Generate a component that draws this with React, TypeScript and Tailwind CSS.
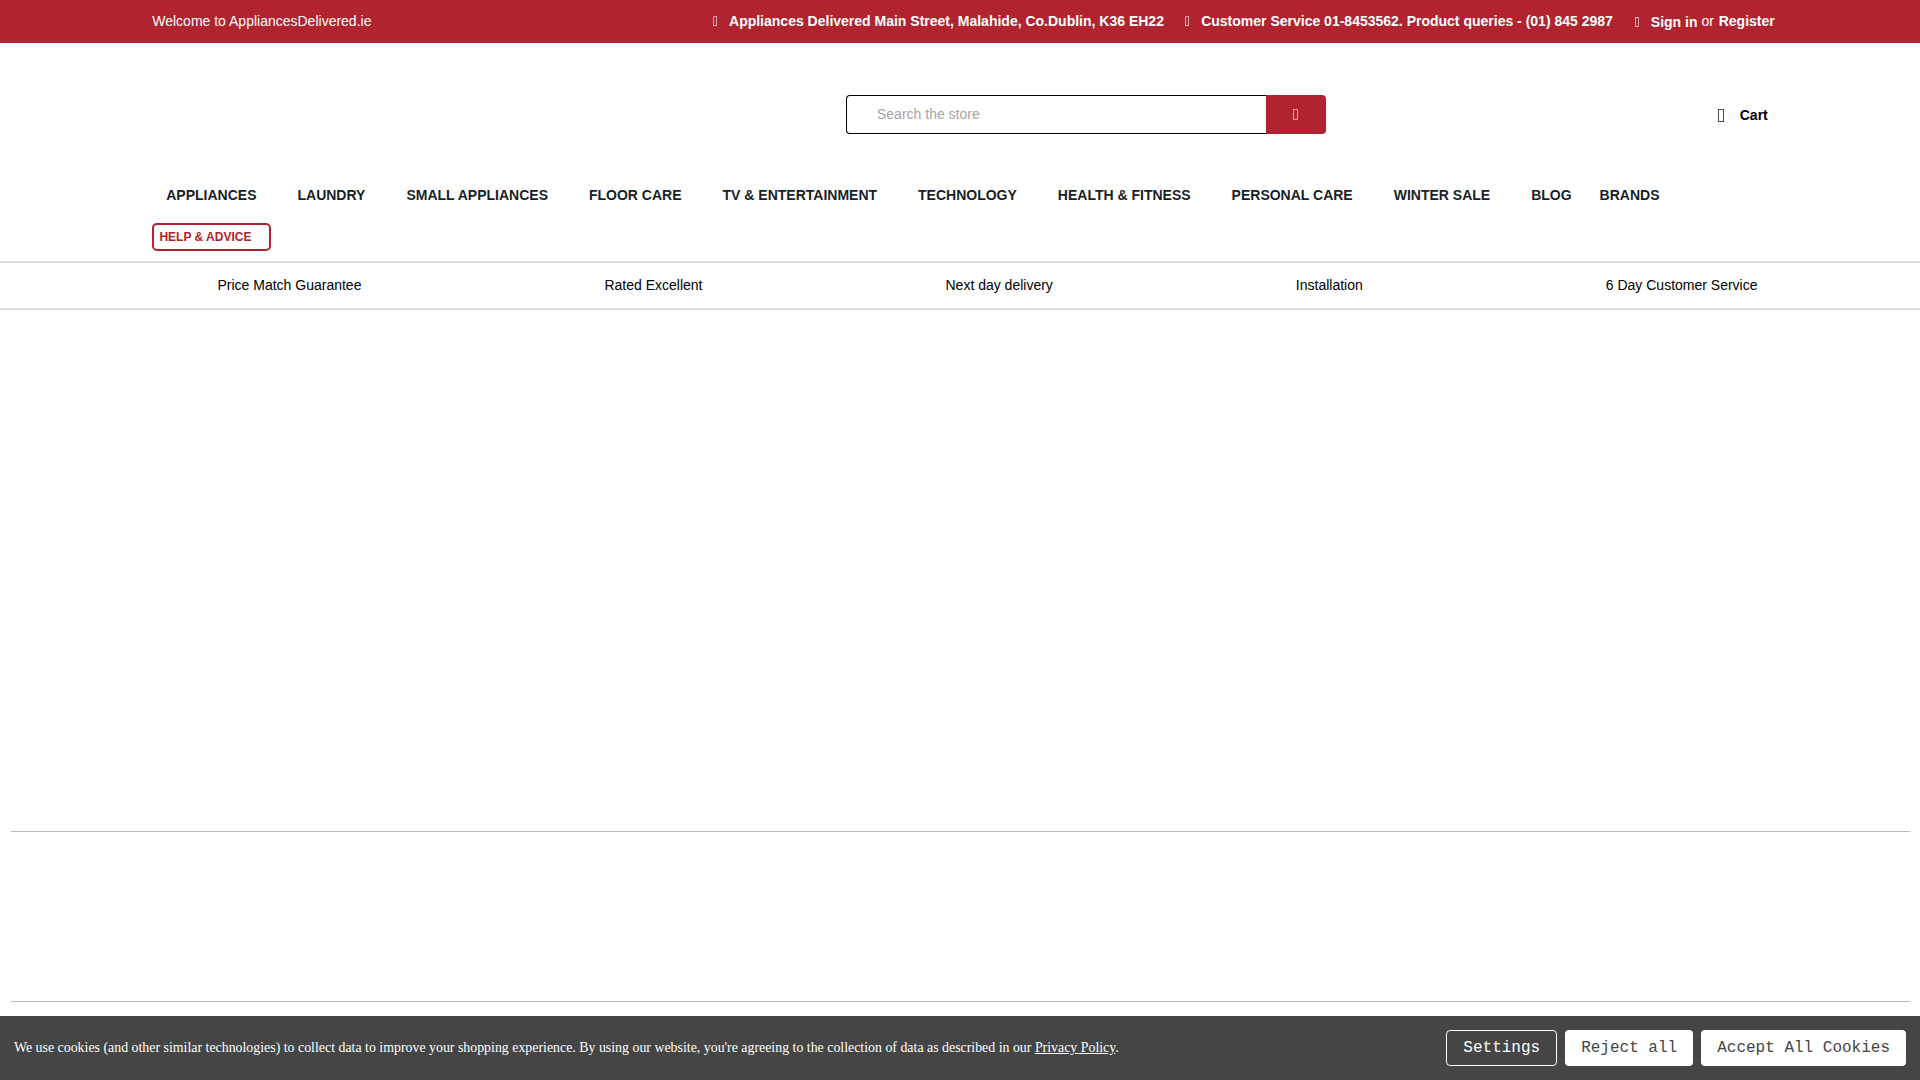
import { useState } from "react";

const navItems = [
  { label: "APPLIANCES", hasMenu: true },
  { label: "LAUNDRY", hasMenu: true },
  { label: "SMALL APPLIANCES", hasMenu: true },
  { label: "FLOOR CARE", hasMenu: true },
  { label: "TV & ENTERTAINMENT", hasMenu: true },
  { label: "TECHNOLOGY", hasMenu: true },
  { label: "HEALTH & FITNESS", hasMenu: true },
  { label: "PERSONAL CARE", hasMenu: true },
  { label: "WINTER SALE", hasMenu: true },
  { label: "BLOG", hasMenu: false },
  { label: "BRANDS", hasMenu: false },
];

const benefits = [
  "Price Match Guarantee",
  "Rated Excellent",
  "Next day delivery",
  "Installation",
  "6 Day Customer Service",
];

// Small outlined box used wherever the header shows an icon
function BoxIcon({ width, height, className }) {
  return (
    <svg width={width} height={height} className={className}>
      <rect
        x="0.5"
        y="0.5"
        width={width - 1}
        height={height - 1}
        fill="none"
        stroke="currentColor"
      />
    </svg>
  );
}

function TopBar() {
  return (
    <div className="flex h-[43px] items-start justify-between bg-[#b0232f] pt-[11px] pl-[152.25px] pr-[145.25px] text-sm leading-5 text-white">
      <p>Welcome to AppliancesDelivered.ie</p>
      <div className="flex">
        <a className="flex font-bold">
          <BoxIcon width={4} height={10} className="mt-[5px] mr-[12px] opacity-60" />
          Appliances Delivered Main Street, Malahide, Co.Dublin, K36 EH22
        </a>
        <a className="ml-[21.25px] flex font-bold">
          <BoxIcon width={4} height={10} className="mt-[5px] mr-[12px] opacity-60" />
          Customer Service 01-8453562. Product queries - (01) 845 2987
        </a>
        <div className="ml-[22px] flex">
          <a className="flex pt-px font-bold">
            <BoxIcon width={4} height={10} className="mt-[5px] mr-[12px] opacity-60" />
            Sign in
          </a>
          <span className="ml-1">or</span>
          <a className="ml-[4.75px] font-bold">Register</a>
        </div>
      </div>
    </div>
  );
}

function Header() {
  const [query, setQuery] = useState("");

  return (
    <header className="flex h-[127px] items-start pt-[52px] pl-[846px]">
      <form className="flex h-[39px] w-[480px]">
        <input
          type="text"
          placeholder="Search the store"
          value={query}
          onChange={(e) => setQuery(e.target.value)}
          className="w-[420px] rounded-l border border-r-0 border-black pl-[30px] pb-px text-sm outline-none placeholder:text-[#a5a5a5]"
        />
        <button
          type="button"
          className="flex w-[60px] items-center justify-center rounded-r bg-[#b0232f] pr-px text-white"
        >
          <BoxIcon width={5} height={11} className="opacity-60" />
        </button>
      </form>
      <a className="ml-[392px] mt-[10px] flex text-sm leading-5 font-bold text-black">
        <BoxIcon width={6} height={13} className="mt-[4px] mr-[15.75px] opacity-70" />
        Cart
      </a>
    </header>
  );
}

function NavBar() {
  return (
    <nav className="h-[91px] px-[152px] pt-[15px] font-bold text-[#181f27]">
      <ul className="flex pl-[0.25px] text-sm leading-5">
        {navItems.map((item) => (
          <li key={item.label} className={item.hasMenu ? "pl-[14px] pr-[27px]" : "px-[14px]"}>
            {item.label}
          </li>
        ))}
      </ul>
      <a className="mt-[18px] flex h-7 w-[119px] items-center rounded-[5px] border-2 border-[#b0232f] pl-[5.4px] text-xs text-[#b0232f]">
        HELP &amp; ADVICE
      </a>
    </nav>
  );
}

function CookieBar() {
  return (
    <div className="flex h-16 items-center justify-between bg-[#454545] pl-[14px] pr-[14px] text-white">
      <p className="font-['Liberation_Serif',serif] text-[13.89px] leading-5">
        We use cookies (and other similar technologies) to collect data to improve your shopping
        experience. By using our website, you're agreeing to the collection of data as described in
        our <a className="underline">Privacy Policy</a>.
      </p>
      <div className="flex gap-2 font-['Liberation_Mono',monospace] text-base">
        <button className="h-9 rounded border border-white px-4">Settings</button>
        <button className="h-9 rounded bg-white px-4 text-[#454545]">Reject all</button>
        <button className="h-9 rounded bg-white px-4 text-[#454545]">Accept All Cookies</button>
      </div>
    </div>
  );
}

export default function App() {
  return (
    <div className="flex h-[1080px] w-[1920px] flex-col overflow-hidden bg-white font-['Liberation_Sans',sans-serif] whitespace-nowrap">
      <TopBar />
      <Header />
      <NavBar />
      <ul className="flex h-[49px] justify-around border-y-2 border-[#dcdcdc] pl-24 pr-[41px] pt-3 text-sm leading-5 text-black">
        {benefits.map((benefit) => (
          <li key={benefit}>{benefit}</li>
        ))}
      </ul>
      <main className="flex-1 pl-[11px] pr-[10px] pt-[521px]">
        <hr className="border-[#b1bbcf]" />
        <hr className="mt-[169px] border-[#b1bbcf]" />
      </main>
      <CookieBar />
    </div>
  );
}
